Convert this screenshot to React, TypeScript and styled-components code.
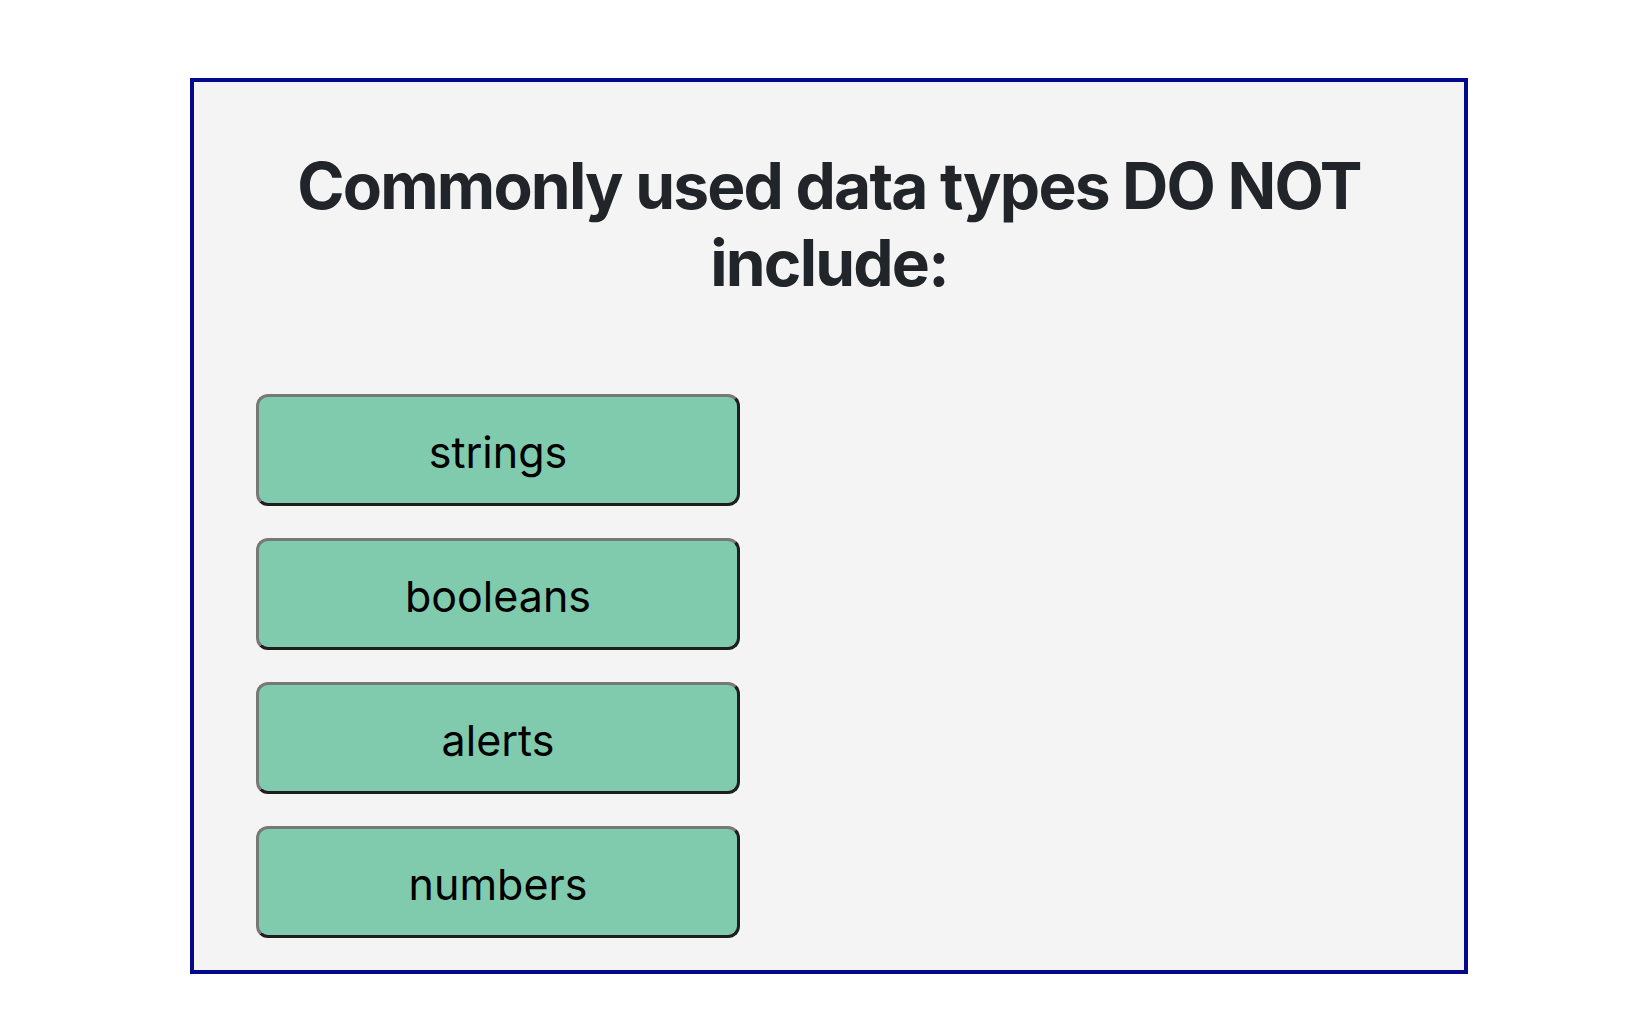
import React from 'react';
import styled, { createGlobalStyle } from 'styled-components';

const choices = ['strings', 'booleans', 'alerts', 'numbers'];

const App: React.FC = () => {
  return (
    <>
      <GlobalStyle />
      <QuizCard>
        <Question>Commonly used data types DO NOT include:</Question>
        <ChoiceList>
          {choices.map((choice) => (
            <ChoiceButton key={choice}>{choice}</ChoiceButton>
          ))}
        </ChoiceList>
      </QuizCard>
    </>
  );
};

const GlobalStyle = createGlobalStyle`
  html, body {
    margin: 0;
    padding: 0;
    background: #ffffff;
  }

  body {
    font-family: Inter, "Noto Sans", "Liberation Sans", sans-serif;
  }
`;

const QuizCard = styled.div`
  box-sizing: border-box;
  width: 1278px;
  margin: 78px 0 0 190px;
  padding: 66px 62px 32px;
  background-color: #f4f4f4;
  border: 4px solid #020a8a;
`;

const Question = styled.h1`
  margin: 0 0 92px;
  font-size: 64px;
  line-height: 1.2;
  font-weight: 700;
  letter-spacing: -1.8px;
  text-align: center;
  color: #212529;
`;

const ChoiceList = styled.div`
  display: flex;
  flex-direction: column;
  gap: 32px;
`;

const ChoiceButton = styled.button`
  box-sizing: border-box;
  width: 484px;
  height: 112px;
  padding: 5px 0 0;
  font-family: Inter, "Noto Sans", "Liberation Sans", sans-serif;
  font-size: 43px;
  letter-spacing: 0;
  color: #000000;
  background-color: #80cbad;
  border: 3px solid;
  border-color: #787878 #1e1e1e #1e1e1e #787878;
  border-radius: 12px;
  cursor: pointer;
`;

export default App;
